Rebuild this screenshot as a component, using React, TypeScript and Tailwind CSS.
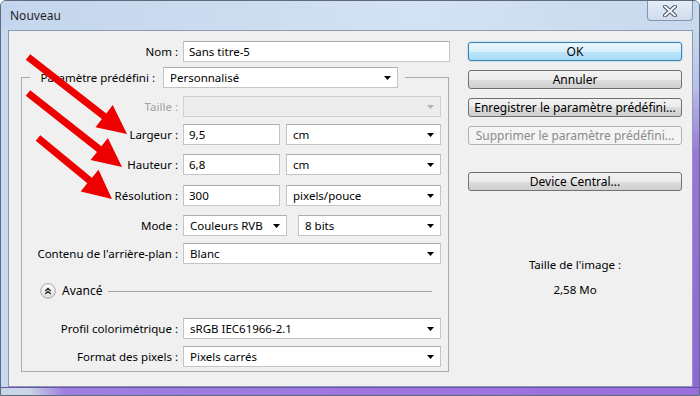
import React from "react";

const font = "font-['Noto_Sans','DejaVu_Sans',sans-serif]";

// petit triangle des listes déroulantes
const Caret = ({ disabled }: { disabled?: boolean }) => (
  <svg width="7" height="4" viewBox="0 0 7 4" className="shrink-0">
    <polygon points="0,0 7,0 3.5,4" fill={disabled ? "#b4b4b4" : "#000"} />
  </svg>
);

const Input = ({ w, value }: { w: string; value: string }) => (
  <div className={`${w} h-[21px] bg-white border border-[#c4c4c4] border-t-[#adadad] flex items-center pl-[5px] shrink-0`}>
    {value}
  </div>
);

const Select = ({ w, value, disabled }: { w: string; value?: string; disabled?: boolean }) => (
  <div
    className={`${w} h-[21px] border flex items-center pl-[6px] pr-[6px] shrink-0 ${
      disabled ? "bg-[#ececec] border-[#d0d0d0]" : "bg-white border-[#c4c4c4] border-t-[#adadad]"
    }`}
  >
    <span className="flex-1 truncate">{value}</span>
    <Caret disabled={disabled} />
  </div>
);

const Row = ({ label, mt, disabled, children }: { label: string; mt: string; disabled?: boolean; children: React.ReactNode }) => (
  <div className={`flex items-center ${mt}`}>
    <div className={`w-[156px] text-right whitespace-nowrap ${disabled ? "text-[#a3a3a3]" : ""}`}>{label}</div>
    <div className="flex items-center ml-[5px]">{children}</div>
  </div>
);

const Button = ({ label, mt, kind }: { label: string; mt?: string; kind?: "default" | "disabled" }) => {
  const look =
    kind === "default"
      ? "border-[#3c7fb1] bg-[linear-gradient(#eaf6fd,#d9f0fc_50%,#bee6fd_50%,#a7d9f5)] shadow-[0_0_2px_#6fc3f0]"
      : kind === "disabled"
      ? "border-[#adb2b5] bg-[#f4f4f4] text-[#8a8a8a]"
      : "border-[#707070] bg-[linear-gradient(#f2f2f2,#ebebeb_50%,#dddddd_50%,#cfcfcf)]";
  return (
    <div className={`h-[19px] rounded-[3px] border flex items-center justify-center whitespace-nowrap text-[12px] ${look} ${mt ?? ""}`}>
      {label}
    </div>
  );
};

function arrowPoints(x1: number, y1: number, x2: number, y2: number, t = 3.6, hl = 29, hw = 14) {
  const dx = x2 - x1;
  const dy = y2 - y1;
  const L = Math.hypot(dx, dy);
  const ux = dx / L;
  const uy = dy / L;
  const px = -uy;
  const py = ux;
  const bx = x2 - ux * hl;
  const by = y2 - uy * hl;
  const pts = [
    [x1 + px * t, y1 + py * t],
    [bx + px * t, by + py * t],
    [bx + px * hw, by + py * hw],
    [x2, y2],
    [bx - px * hw, by - py * hw],
    [bx - px * t, by - py * t],
    [x1 - px * t, y1 - py * t],
  ];
  return pts.map((p) => p.map((v) => v.toFixed(1)).join(",")).join(" ");
}

const arrows = [
  { x1: 27, y1: 56, x2: 126, y2: 133 },
  { x1: 27, y1: 92, x2: 121, y2: 166 },
  { x1: 37, y1: 137, x2: 111, y2: 198 },
];

export default function App() {
  return (
    <div className={`relative w-[700px] h-[396px] overflow-hidden flex flex-col bg-[#c8d9ee] border border-[#5d6b7c] rounded-t-[6px] text-[11.5px] text-black ${font}`}>
      {/* barre de titre */}
      <div className="h-[29px] flex items-start justify-between shrink-0 bg-[linear-gradient(90deg,#c4d6ed,#d3e2f3_60%,#c8d9ee)]">
        <div className="pl-[9px] pt-[6px] text-[12px] text-[#1e1e1e]">Nouveau</div>
        <div className="mr-[6px] w-[46px] h-[20px] rounded-b-[4px] border border-t-0 border-[#8496ae] bg-[linear-gradient(#e4edf7,#cfdcec)] flex items-center justify-center">
          <svg width="16" height="12" viewBox="0 0 16 12">
            <path d="M3 1.5 L13 10.5 M13 1.5 L3 10.5" stroke="#4b5563" strokeWidth="4" strokeLinecap="round" />
            <path d="M3 1.5 L13 10.5 M13 1.5 L3 10.5" stroke="#f4f6f9" strokeWidth="2" strokeLinecap="round" />
          </svg>
        </div>
      </div>

      <div className="flex-1 flex min-h-0">
        <div className="w-[7px] shrink-0" />
        {/* zone client */}
        <div className="w-[685px] flex bg-[#f0f0f0] border border-[#8b9bb0]">
          {/* colonne gauche */}
          <div className="w-[452px] shrink-0 pt-[10px]">
            <div className="flex items-center">
              <div className="w-[169px] text-right">Nom :</div>
              <div className="ml-[5px]">
                <Input w="w-[267px]" value="Sans titre-5" />
              </div>
            </div>

            <fieldset className="ml-[12px] mt-[5px] w-[428px] border border-[#ababab] pb-[4px]">
              <legend className="ml-[8px]">
                <div className="flex items-center w-[375px] pr-[7px]">
                  <div className="flex-1 text-right pr-[8px] whitespace-nowrap">Paramètre prédéfini :</div>
                  <Select w="w-[235px]" value="Personnalisé" />
                </div>
              </legend>

              <Row label="Taille :" mt="mt-[8px]" disabled>
                <Select w="w-[258px]" disabled />
              </Row>
              <Row label="Largeur :" mt="mt-[7px]">
                <Input w="w-[97px]" value="9,5" />
                <div className="ml-[6px]">
                  <Select w="w-[155px]" value="cm" />
                </div>
              </Row>
              <Row label="Hauteur :" mt="mt-[9px]">
                <Input w="w-[97px]" value="6,8" />
                <div className="ml-[6px]">
                  <Select w="w-[155px]" value="cm" />
                </div>
              </Row>
              <Row label="Résolution :" mt="mt-[10px]">
                <Input w="w-[97px]" value="300" />
                <div className="ml-[6px]">
                  <Select w="w-[155px]" value="pixels/pouce" />
                </div>
              </Row>
              <Row label="Mode :" mt="mt-[9px]">
                <Select w="w-[104px]" value="Couleurs RVB" />
                <div className="ml-[11px]">
                  <Select w="w-[143px]" value="8 bits" />
                </div>
              </Row>
              <Row label="Contenu de l'arrière-plan :" mt="mt-[7px]">
                <Select w="w-[258px]" value="Blanc" />
              </Row>

              <div className="flex items-center mt-[19px] ml-[18px] mr-[16px] h-[16px]">
                <svg width="16" height="16" viewBox="0 0 16 16" className="shrink-0">
                  <defs>
                    <linearGradient id="av" x1="0" y1="0" x2="0" y2="1">
                      <stop offset="0" stopColor="#ffffff" />
                      <stop offset="1" stopColor="#dcdcdc" />
                    </linearGradient>
                  </defs>
                  <circle cx="8" cy="8" r="7.3" fill="url(#av)" stroke="#a5a5a5" />
                  <path d="M5.2 8 L8 5.3 L10.8 8 M5.2 11 L8 8.3 L10.8 11" stroke="#2b2b2b" strokeWidth="1.3" fill="none" />
                </svg>
                <span className="ml-[6px] text-[12px]">Avancé</span>
                <div className="flex-1 ml-[6px] h-px bg-[#a5a5a5]" />
              </div>

              <Row label="Profil colorimétrique :" mt="mt-[19px]">
                <Select w="w-[258px]" value="sRGB IEC61966-2.1" />
              </Row>
              <Row label="Format des pixels :" mt="mt-[7px]">
                <Select w="w-[258px]" value="Pixels carrés" />
              </Row>
            </fieldset>
          </div>

          {/* colonne droite */}
          <div className="w-[214px] shrink-0 ml-[7px] pt-[11px] flex flex-col">
            <Button label="OK" kind="default" />
            <Button label="Annuler" mt="mt-[9px]" />
            <Button label="Enregistrer le paramètre prédéfini..." mt="mt-[9px]" />
            <Button label="Supprimer le paramètre prédéfini..." mt="mt-[9px]" kind="disabled" />
            <Button label="Device Central..." mt="mt-[27px]" />
            <div className="mt-[66px] h-[16px] leading-[16px] text-center">Taille de l'image :</div>
            <div className="mt-[9px] h-[16px] leading-[16px] text-center">2,58 Mo</div>
          </div>
        </div>
        <div className="flex-1 bg-[linear-gradient(180deg,#c8d9ee_0%,#b9c2ea_15%,#9b74da_35%,#9166d6_100%)]" />
      </div>
      <div className="h-[8px] shrink-0 bg-[linear-gradient(90deg,#c9d6e6_0%,#c9d6e6_4%,#a07ee0_9%,#9a6fdc_100%)] border-t border-[#6b4fa8]" />

      {/* flèches rouges */}
      <svg className="absolute inset-0 pointer-events-none" width="700" height="396">
        {arrows.map((a, i) => (
          <polygon key={i} points={arrowPoints(a.x1, a.y1, a.x2, a.y2)} fill="#ee0000" />
        ))}
      </svg>
    </div>
  );
}
